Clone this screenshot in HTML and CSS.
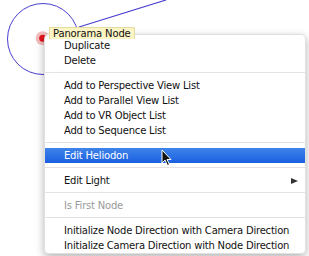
FILE: index.html
```html
<!DOCTYPE html>
<html>
<head>
<meta charset="utf-8">
<link rel="stylesheet" href="styles.css">
</head>
<body>
<div class="canvas">
  <svg class="diagram" width="309" height="256" viewBox="0 0 309 256">
    <circle cx="43" cy="39" r="35.5" fill="none" stroke="#4a3fd0" stroke-width="1"/>
    <line x1="79" y1="27" x2="166" y2="0" stroke="#4a3fd0" stroke-width="1.2"/>
    <circle cx="42.7" cy="38.3" r="7" fill="#f2bcbc"/>
    <circle cx="42.7" cy="38.3" r="3.5" fill="#e0141c"/>
  </svg>
  <div class="menu">
    <div class="item">Duplicate</div>
    <div class="item">Delete</div>
    <div class="sep"></div>
    <div class="item">Add to Perspective View List</div>
    <div class="item">Add to Parallel View List</div>
    <div class="item">Add to VR Object List</div>
    <div class="item">Add to Sequence List</div>
    <div class="sep"></div>
    <div class="item active">Edit Heliodon</div>
    <div class="sep"></div>
    <div class="item sub">Edit Light<span class="arrow"></span></div>
    <div class="sep"></div>
    <div class="item disabled">Is First Node</div>
    <div class="sep"></div>
    <div class="item">Initialize Node Direction with Camera Direction</div>
    <div class="item">Initialize Camera Direction with Node Direction</div>
  </div>
  <div class="tooltip">Panorama Node</div>
  <svg class="cursor" width="12" height="18" viewBox="0 0 12 18">
    <path d="M1 1 L1 14 L4 11 L6.5 16.5 L8.5 15.5 L6 10.5 L10 10.5 Z" fill="#111" stroke="#fff" stroke-width="1"/>
  </svg>
</div>
</body>
</html>
```
FILE: styles.css
```css
html, body {
  margin: 0;
  padding: 0;
  background: #fff;
}
.canvas {
  position: relative;
  width: 309px;
  height: 256px;
  overflow: hidden;
  background: #fff;
  font-family: "DejaVu Sans", "Liberation Sans", sans-serif;
}
.diagram {
  position: absolute;
  left: 0;
  top: 0;
}
.menu {
  position: absolute;
  left: 44px;
  top: 34px;
  width: 262px;
  height: 220px;
  box-sizing: border-box;
  padding-top: 3px;
  background: rgba(255, 255, 255, 0.98);
  border: 1px solid rgba(0, 0, 0, 0.12);
  border-radius: 5px;
  box-shadow: 0 3px 8px rgba(0, 0, 0, 0.3);
  display: flex;
  flex-direction: column;
}
.item {
  height: 15px;
  line-height: 15px;
  padding-left: 19px;
  font-size: 10px;
  letter-spacing: -0.2px;
  color: #111;
  white-space: nowrap;
  display: flex;
  align-items: center;
}
.item.active {
  background: linear-gradient(#3f84ea, #1a5fe0);
  color: #fff;
}
.item.disabled {
  color: #9a9a9a;
}
.item.sub {
  justify-content: space-between;
  padding-right: 7px;
}
.arrow {
  width: 0;
  height: 0;
  border-top: 3.5px solid transparent;
  border-bottom: 3.5px solid transparent;
  border-left: 7px solid #333;
}
.sep {
  height: 1px;
  margin: 4px 0 5px;
  background: #e3e3e3;
}
.tooltip {
  position: absolute;
  left: 49px;
  top: 27px;
  height: 11px;
  padding: 0 3px;
  line-height: 11px;
  font-size: 10px;
  letter-spacing: -0.15px;
  color: #111;
  background: #fbf4c4;
  border: 1px solid #e4dba0;
  border-bottom: none;
}
.cursor {
  position: absolute;
  left: 161px;
  top: 149px;
}
```
